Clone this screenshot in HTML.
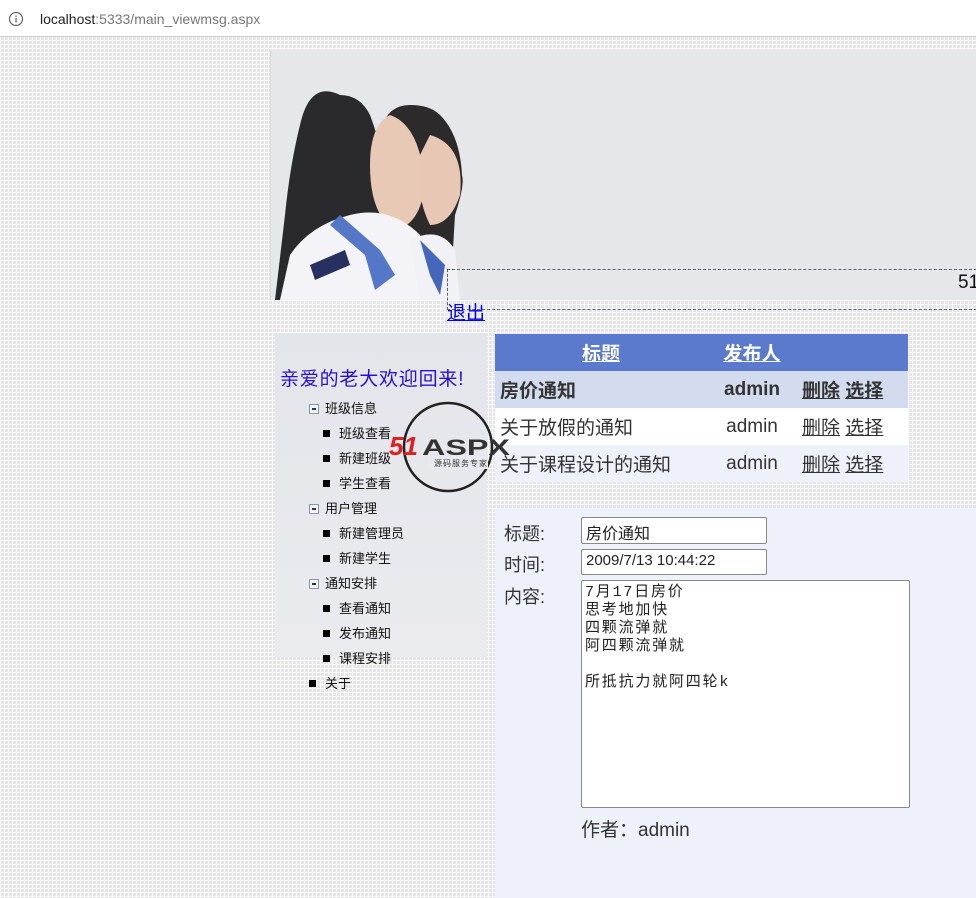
<!DOCTYPE html>
<html><head><meta charset="utf-8"><style>
*{margin:0;padding:0;box-sizing:border-box}
body{width:976px;height:898px;overflow:hidden;position:relative;font-family:"Liberation Sans","Noto Sans CJK SC",sans-serif;
background-color:#e6e6e6;
background-image:linear-gradient(90deg,#f8f8f8 1px,transparent 1px),linear-gradient(#f8f8f8 1px,transparent 1px);
background-size:4px 4px;}
.abs{position:absolute}
.bar{left:0;top:0;width:976px;height:37px;background:#fff;border-bottom:1px solid #d0d0d0}
.url{left:40px;top:11px;font-size:14px;color:#222}
.url span{color:#777}
.hdr{left:270px;top:50px;width:706px;height:250px;background:#e6e7eb;border-left:1px solid #d8d8d8}
.dash{left:447px;top:269px;width:540px;height:41px;border:1px dashed #5a6078;border-right:none}
a{color:#0000ee}
.left{left:275px;top:333px;width:212px;height:324px;background:linear-gradient(#e4e5ea,#eaebef)}
.tree{font-size:13px;color:#111;line-height:25px}
.tree div{position:absolute;white-space:nowrap}
.sq{display:inline-block;width:7px;height:7px;background:#000;margin-right:9px;vertical-align:1px}
.mn{display:inline-block;width:10px;height:10px;border:1px solid #8a97b0;background:#f2f4f8;margin-right:6px;vertical-align:-1px;position:relative}
.mn:after{content:"";position:absolute;left:2px;top:3px;width:4px;height:2px;background:#334}
table{border-collapse:collapse}
td{font-size:19px;color:#333;height:37px;padding:0 5px;white-space:nowrap}
.lnk{color:#333;text-decoration:underline}
.form{left:495px;top:508px;width:481px;height:390px;background:#eef1fa}
.lbl{font-size:18px;color:#333}
.inp{background:#fff;border:1px solid #888;border-radius:2px;font-size:15px;color:#222;padding:2px 4px}
</style></head><body>
<div class="abs bar"></div>
<svg class="abs" style="left:8px;top:11px" width="16" height="16"><circle cx="8" cy="8" r="6.5" fill="none" stroke="#666" stroke-width="1.2"/><rect x="7.4" y="7" width="1.3" height="4.5" fill="#666"/><rect x="7.4" y="4.5" width="1.3" height="1.3" fill="#666"/></svg>
<div class="abs url">localhost<span>:5333/main_viewmsg.aspx</span></div>

<div class="abs hdr"></div>
<svg class="abs" style="left:270px;top:75px" width="200" height="225">
<path d="M70 20 Q40 5 30 50 Q20 90 15 140 L5 225 L170 225 L165 170 Q140 150 120 130 Q115 80 100 40 Q90 20 70 20Z" fill="#2a2a2e"/>
<path d="M140 30 Q115 30 110 60 L115 150 L180 225 L185 140 Q195 110 192 100 Q190 60 170 40 Q160 30 140 30Z" fill="#2c2a2a"/>
<path d="M120 40 Q150 50 155 110 Q150 150 125 155 Q100 140 100 90 Q100 50 120 40Z" fill="#e8c9b5"/>
<path d="M160 60 Q195 70 190 120 Q180 150 160 150 Q145 120 150 80Z" fill="#e8c8b4"/>
<path d="M10 225 L20 180 Q40 150 80 140 Q120 130 150 160 L175 225Z" fill="#f4f4f8"/>
<path d="M140 165 Q170 150 185 175 L190 225 L150 225Z" fill="#f2f2f6"/>
<path d="M70 140 L110 175 L125 200 L105 215 L95 180 L60 150Z" fill="#5577c8"/>
<path d="M150 165 L175 190 L170 220 L160 200Z" fill="#4466bb"/>
<path d="M40 190 L75 175 L80 190 L45 205Z" fill="#283060"/>
</svg>
<div class="abs dash"></div>
<div class="abs" style="left:958px;top:272px;font-size:19px;color:#111">51</div>
<a class="abs" href="#" style="left:447px;top:298px;font-size:19px">退出</a>

<div class="abs left"></div>
<div class="abs" style="left:280px;top:364px;font-size:19px;letter-spacing:0.8px;color:#2a0fd0">亲爱的老大欢迎回来!</div>
<div class="abs tree" style="left:0;top:0">
<div style="left:309px;top:396px"><span class="mn"></span>班级信息</div>
<div style="left:323px;top:421px"><span class="sq"></span>班级查看</div>
<div style="left:323px;top:446px"><span class="sq"></span>新建班级</div>
<div style="left:323px;top:471px"><span class="sq"></span>学生查看</div>
<div style="left:309px;top:496px"><span class="mn"></span>用户管理</div>
<div style="left:323px;top:521px"><span class="sq"></span>新建管理员</div>
<div style="left:323px;top:546px"><span class="sq"></span>新建学生</div>
<div style="left:309px;top:571px"><span class="mn"></span>通知安排</div>
<div style="left:323px;top:596px"><span class="sq"></span>查看通知</div>
<div style="left:323px;top:621px"><span class="sq"></span>发布通知</div>
<div style="left:323px;top:646px"><span class="sq"></span>课程安排</div>
<div style="left:309px;top:671px"><span class="sq"></span>关于</div>
</div>

<div class="abs" style="left:495px;top:334px">
<table style="width:413px">
<tr style="background:#5b7acd"><td style="width:212px;text-align:center;font-weight:bold;color:#fff"><span style="text-decoration:underline">标题</span></td><td style="text-align:center;font-weight:bold;color:#fff;width:90px"><span style="text-decoration:underline">发布人</span></td><td></td></tr>
<tr style="background:#d3dcee;font-weight:bold"><td style="font-weight:bold">房价通知</td><td style="font-weight:bold;text-align:center">admin</td><td style="font-weight:bold"><span class="lnk">删除</span> <span class="lnk">选择</span></td></tr>
<tr style="background:#fff"><td>关于放假的通知</td><td style="text-align:center">admin</td><td><span class="lnk">删除</span> <span class="lnk">选择</span></td></tr>
<tr style="background:#eef1f9"><td>关于课程设计的通知</td><td style="text-align:center">admin</td><td><span class="lnk">删除</span> <span class="lnk">选择</span></td></tr>
</table></div>

<svg class="abs" style="left:388px;top:400px" width="130" height="96">
<circle cx="60" cy="47" r="44" fill="none" stroke="#222" stroke-width="2.5"/>
<rect x="40" y="56" width="60" height="13" fill="#e8e9ee"/>
<text x="1" y="55" font-family="Liberation Sans" font-weight="bold" font-style="italic" font-size="26" fill="#e02020">51</text>
<text x="34" y="55" font-family="Liberation Sans" font-weight="bold" font-size="22" fill="#333" textLength="88" lengthAdjust="spacingAndGlyphs">ASPX</text>
<text x="46" y="66" font-family="Noto Sans CJK SC" font-size="8" fill="#333" letter-spacing="1">源码服务专家</text>
</svg>

<div class="abs form"></div>
<div class="abs lbl" style="left:504px;top:520px">标题:</div>
<div class="abs lbl" style="left:504px;top:551px">时间:</div>
<div class="abs lbl" style="left:504px;top:583px">内容:</div>
<div class="abs inp" style="left:581px;top:517px;width:186px;height:27px;font-size:16px">房价通知</div>
<div class="abs inp" style="left:581px;top:549px;width:186px;height:26px">2009/7/13 10:44:22</div>
<div class="abs inp" style="left:581px;top:580px;width:329px;height:228px;font-size:15px;line-height:18px;letter-spacing:1.8px;font-family:'Liberation Mono','Noto Sans CJK SC',monospace;padding:3px 3px">7月17日房价<br>思考地加快<br>四颗流弹就<br>阿四颗流弹就<br><br>所抵抗力就阿四轮k</div>
<div class="abs" style="left:581px;top:815px;font-size:19px;color:#333">作者：admin</div>
</body></html>
